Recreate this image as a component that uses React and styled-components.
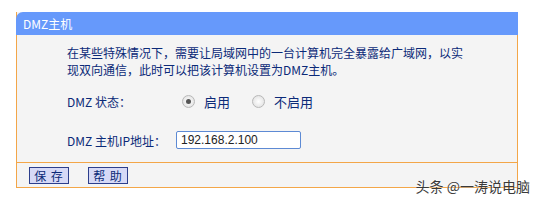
import React from "react"
import styled, { createGlobalStyle } from "styled-components"

const GlobalStyle = createGlobalStyle`
  html, body {
    margin: 0;
    padding: 0;
    background: #ffffff;
  }
  body {
    font-family: "Noto Sans CJK SC", "DejaVu Sans", sans-serif;
    font-size: 12px;
  }
`

const App = () => {
  return (
    <Page>
      <GlobalStyle />
      <Panel>
        <Header>DMZ主机</Header>
        <Body>
          <Intro>
            在某些特殊情况下，需要让局域网中的一台计算机完全暴露给广域网，以实现双向通信，此时可以把该计算机设置为DMZ主机。
          </Intro>
          <Row top={13}>
            <Label>DMZ 状态：</Label>
            <RadioItem>
              <Radio checked />
              启用
            </RadioItem>
            <RadioItem>
              <Radio />
              不启用
            </RadioItem>
          </Row>
          <Row top={19}>
            <Label>DMZ 主机IP地址：</Label>
            <Input defaultValue="192.168.2.100" />
          </Row>
        </Body>
        <Footer>
          <Button>保 存</Button>
          <Button>帮 助</Button>
        </Footer>
      </Panel>
      <Watermark>头条 @一涛说电脑</Watermark>
    </Page>
  )
}

export default App

const Page = styled.div`
  position: relative;
  width: 536px;
  height: 200px;
  padding: 12px 0 0 16px;
  box-sizing: border-box;
`

const Panel = styled.div`
  width: 502px;
  background: #f4f4f4;
  border: 1px solid #f3a648;
  border-top: none;
  box-sizing: border-box;
`

const Header = styled.div`
  height: 23px;
  margin: 0 -1px;
  padding-left: 7px;
  background: #6699fb;
  border-top-left-radius: 7px;
  color: #ffffff;
  font-size: 12px;
  line-height: 23px;
`

const Body = styled.div`
  padding: 9px 0 12px 50px;
  border-bottom: 1px solid #f3a648;
  color: #0b2a78;
`

const Intro = styled.p`
  margin: 0;
  width: 400px;
  line-height: 17px;
  font-size: 12px;
`

const Row = styled.div`
  display: flex;
  align-items: center;
  height: 20px;
  margin-top: ${(p) => p.top}px;
`

const Label = styled.div`
  width: 109px;
`

const RadioItem = styled.div`
  display: flex;
  align-items: center;
  gap: 9px;
  margin-left: 6px;
  width: 64px;
  white-space: nowrap;
  font-size: 13px;
`

const Radio = styled.span`
  position: relative;
  flex: none;
  width: 11px;
  height: 11px;
  border-radius: 50%;
  border: 1px solid #b8b8b8;
  background: radial-gradient(circle, #ffffff 0%, #dcdcdc 100%);
  &::after {
    content: "";
    display: ${(p) => (p.checked ? "block" : "none")};
    position: absolute;
    left: 3px;
    top: 3px;
    width: 5px;
    height: 5px;
    border-radius: 50%;
    background: #555555;
  }
`

const Input = styled.input`
  width: 125px;
  height: 18px;
  box-sizing: border-box;
  border: 1px solid #5d8ad4;
  border-radius: 2px;
  padding: 0 4px;
  background: #ffffff;
  color: #222222;
  font-family: "Liberation Sans", Arial, sans-serif;
  font-size: 12px;
  outline: none;
`

const Footer = styled.div`
  display: flex;
  gap: 19px;
  height: 24px;
  align-items: center;
  padding-left: 12px;
`

const Button = styled.button`
  width: 40px;
  height: 17px;
  padding: 0;
  background: #d6d9f6;
  border: 1px solid #2c3e8c;
  color: #0b2a78;
  font-family: "Noto Sans CJK SC", sans-serif;
  font-size: 12px;
  line-height: 15px;
  letter-spacing: 1px;
`

const Watermark = styled.div`
  position: absolute;
  right: 6px;
  bottom: 4px;
  color: #3a3a3a;
  font-size: 14px;
  text-shadow: 0 0 2px #ffffff;
`
